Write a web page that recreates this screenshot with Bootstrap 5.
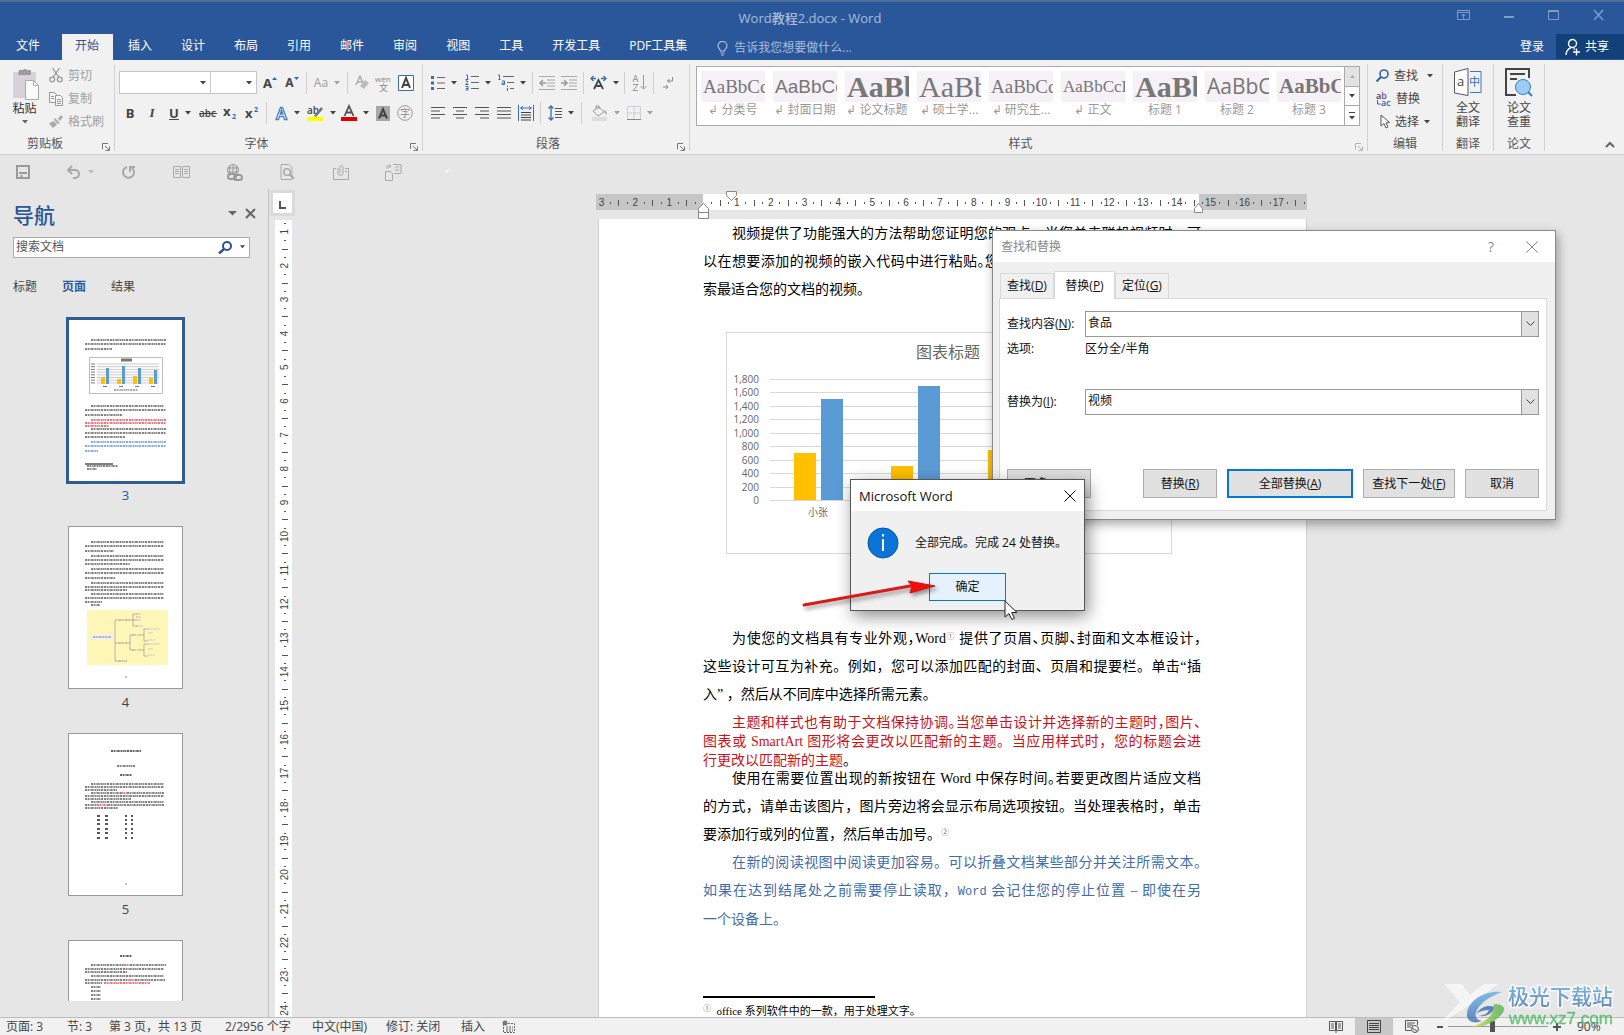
<!DOCTYPE html>
<html lang="zh-CN">
<head>
<meta charset="utf-8">
<meta name="viewport" content="width=device-width, initial-scale=1">
<title>Word教程2.docx - Word</title>
<link rel="stylesheet" href="https://cdn.jsdelivr.net/npm/bootstrap@5.3.0/dist/css/bootstrap.min.css">
<script src="https://cdn.jsdelivr.net/npm/bootstrap@5.3.0/dist/js/bootstrap.bundle.min.js"></script>
<style>
body{font-family:"Open Sans","Noto Sans CJK SC",sans-serif;font-size:12px;line-height:16px;color:#444;background:#e6e6e6;height:100vh;overflow:hidden}
button,input,select{font:inherit;color:inherit;border-radius:0}
svg{display:block;flex:none}
.plain{border:0;background:none;padding:0;display:inline-flex;align-items:center;justify-content:center;text-decoration:none;color:inherit;white-space:nowrap;flex:none}
/* title and tabs */
.titlebar{background:#2a579a;border-top:2px solid #4f6d99;height:34px;color:#a9bddb;padding-right:4px}
.titlebar h1{font-size:13px;line-height:16px;margin:0}
.titlebar .wins{right:20px;top:6px;gap:34px}
.tabrow{background:#2a579a;height:26px;color:#fff}
.tabrow a{height:26px;padding:0 14px 6px 15px;align-items:flex-end}
.tabrow a.filetab{padding:0 22px 6px 16px}
.tabrow a.is-on{background:#f1f1f1;color:#2a579a;padding:0 14px 6px 13px}
.tell{color:#a9bddb;gap:6px;margin-left:16px;padding-top:2px}
.sharebtn{background:#124078;height:25px;width:68px;gap:4px;color:#fff;padding-right:6px}
/* ribbon */
.ribbon{background:#f1f1f1;border-bottom:1px solid #cfcfcf;height:95px}
.grp{border-right:1px solid #d2d2d2;margin:4px 0;height:87px;position:relative;flex:none}
.grp .cap{position:absolute;left:0;right:0;bottom:-1px;text-align:center;color:#555}
.launch{position:absolute;right:4px;bottom:0}
.row-a{height:23px;margin-top:7px}
.row-b{height:22px;margin-top:8px}
.b22{width:22px;height:22px}
.b34{width:34px;height:22px;gap:6px}
.vsep{width:1px;height:22px;background:#d0d0d0;margin:0 3px;flex:none}
.fsel{height:23px;border:1px solid #c6c6c6;background:#fff;appearance:none;padding:0}
.combo{position:relative;flex:none}
.combo svg{position:absolute;right:5px;top:10px;pointer-events:none}
.glyph{font-family:"Noto Sans","Open Sans",sans-serif;font-size:13px;font-weight:700}
.gallery{border:1px solid #ababab;background:#fff;height:60px;margin:2px 7px 0 6px}
.sty{width:64px;color:#9a9a9a;justify-content:flex-start}
.sty .pv{width:64px;height:31px;background:#f5f1f6;color:#777;overflow:hidden;line-height:31px;text-align:left;padding-left:2px;white-space:nowrap}
.f-serif{font-family:"Liberation Serif",serif}
.f-mono{font-family:"Liberation Sans",sans-serif}
.s17{font-size:17px}.s19{font-size:19px}.s21{font-size:21px}.s30{font-size:30px}
.galscroll button{width:15px;border-left:1px solid #ababab;flex:1 1 0}
.galscroll button+button{border-top:1px solid #ababab}
.galscroll button:first-child{background:#e3e3e3}
.edit button{height:23px;gap:5px;color:#444}
.plain.off{color:#a0a0a0}
.big{flex-direction:column;line-height:14px}
/* quick access */
.qat{height:35px;padding-left:14px;gap:36px}
.qat button{width:17px;height:34px;overflow:visible}
/* navigation pane */
.nav-pane{width:269px;border-right:1px solid #c0c0c0;padding:0 18px 0 13px}
.nav-pane h2{font-size:21px;line-height:28px;color:#2a579a;margin:0}
.searchbox{border:1px solid #ababab;background:#fff;height:25px}
.searchbox input{border:0;outline:0;background:none;padding:0 0 0 2px}
.searchbox input::placeholder{color:#555;opacity:1}
.navtabs{gap:25px;margin-top:21px}
.thumbs{overflow:hidden;padding-right:12px;margin:20px 0 16px}
.thumb{height:207px}
.thumb .sheet{border:1px solid #999;background:#fff;width:115px;height:163px}
.thumb .num{font-size:13px;line-height:16px;margin-top:5px}
.thumb.is-on .sheet{outline:2px solid #2f5c93;border-color:#2f5c93}
.thumb.is-on .num{color:#2a579a}
/* document */
.vruler{width:25px;margin-left:1px;padding-top:1px}
.corner{width:25px;height:26px;border:3px solid #dadada;background:#fff}
.vstrip{background:#fff;width:17px;margin:4px 0 0 5px;overflow:hidden}
.docarea{padding-right:14px;overflow:hidden}
.pagewrap{width:709px;position:relative}
.hruler{height:25px}
.sheetpage{background:#fff;border:1px solid #d0d0d0;border-width:0 1px;margin-top:1px;padding:1px 105px 0 104px}
.para{font-family:"Liberation Serif","Noto Sans CJK SC",serif;font-size:14px;line-height:28px;color:#000;margin:0}
.para span.ln{display:block;white-space:nowrap;text-align:justify;text-align-last:justify}
.para span.end{text-align:left;text-align-last:left}
.para span.ind{padding-left:29px}
.para i{font-style:normal;font-feature-settings:"halt"}
.para sup{font-size:8px;line-height:8px;color:#777}
.para.tight{line-height:19px;margin:4px 0 -5px;color:#d01018}
.para.blue{color:#3f6cae}
.para.blue b{font-family:"Liberation Mono",monospace;font-weight:400;font-size:12px}
.chartbox{border:1px solid #d9d9d9;width:446px;height:222px;margin:28px 0 71px 23px}
.footrule{width:172px;height:2px;background:#000;margin-top:62px}
.foot{font-size:11px;line-height:20px;margin-top:3px}
/* dialogs */
.dlg{position:absolute;background:#f0f0f0;border:1px solid #8a8a8a;color:#111;z-index:5}
.dlg .bar{background:#fff;height:31px}
.dlg-find{left:394px;top:41px;width:564px;height:290px;box-shadow:2px 4px 10px rgba(0,0,0,.35)}
.dlg-msg{left:252px;top:290px;width:235px;height:132px;border-color:#555;box-shadow:3px 5px 16px rgba(0,0,0,.45);z-index:6}
.ftabs{padding:9px 7px 0;height:36px}
.ftabs button{height:25px;border:1px solid #d9d9d9;border-bottom:0;background:#f0f0f0;width:54px}
.ftabs button.is-on{background:#fff;height:28px;width:61px;margin-bottom:-1px;z-index:1}
.fpanel{background:#fff;border:1px solid #d9d9d9;margin:0 8px 0 6px;height:213px;padding:12px 7px 0 7px}
.fpanel label,.fpanel .lab{width:78px;flex:none}
.cbx{border:1px solid #999;height:26px;background:#fff}
.cbx input{border:0;outline:0;padding:0 0 2px 2px;background:none}
.cbx button{width:18px;border:1px solid #999;background:#e1e1e1;margin:-1px;height:26px}
.wbtn{border:1px solid #adadad;background:#e1e1e1;height:29px;padding:0;color:#111}
.wbtn.prime{border:2px solid #0078d7}
.w74{width:74px}.w84{width:84px}.w92{width:92px}.w126{width:126px}
.okbtn{border:1px solid #0078d7;background:#e5f1fb;width:77px;height:28px;color:#111}
.arrow{position:absolute;left:200px;top:382px;z-index:7;pointer-events:none}
.pointer{position:absolute;left:406px;top:411px;z-index:8;pointer-events:none}
/* status bar */
.status{height:18px;background:#f1f1f1;border-top:1px solid #bdbdbd;padding-left:6px;position:relative}
.status .views{margin-right:6px}
.status .views button{width:38px;height:17px}
.status .views button.is-on{background:#c8c8c8}
.zoombox{width:187px}
.zoomr{appearance:none;background:none;width:100px;height:16px;margin:0 5px}
.zoomr::-webkit-slider-runnable-track{height:1px;background:#999}
.zoomr::-webkit-slider-thumb{appearance:none;width:5px;height:11px;background:#555;margin-top:-5px}
.wm{position:absolute;right:8px;bottom:5px;z-index:9;pointer-events:none;opacity:.75}
</style>
</head>
<body class="d-flex flex-column m-0">

<svg width="0" height="0" class="position-absolute">
  <defs>
    <symbol id="car" viewBox="0 0 6 4"><path d="M0 0h6L3 3.5z" fill="currentColor"/></symbol>
    <symbol id="lau" viewBox="0 0 8 8"><path d="M.5 6V.5H6M3 3l4 4M7.500 3.500v4h-4" fill="none" stroke="#777"/></symbol>
  </defs>
</svg>

<header>
  <div class="titlebar position-relative d-flex justify-content-center align-items-center">
    <h1>Word教程2.docx - Word</h1>
    <div class="wins position-absolute d-flex">
      <button class="plain" aria-label="功能区显示选项"><svg width="13" height="14" fill="none" stroke="#7f9cc9"><path d="M.5 2.500h12v9H.5zM.5 4.500h12M6.500 10.500V6M4.500 8l2-2 2 2"/></svg></button>
      <button class="plain" aria-label="最小化"><svg width="10" height="14"><path d="M0 8h10v2H0z" fill="#7f9cc9"/></svg></button>
      <button class="plain" aria-label="最大化"><svg width="11" height="14" fill="none" stroke="#7f9cc9"><path d="M.5 2.500h10v9H.5zM0 3.500h11"/></svg></button>
      <button class="plain" aria-label="关闭"><svg width="11" height="14" stroke="#7f9cc9" stroke-width="1.500"><path d="M1 2l9 10M10 2L1 12"/></svg></button>
    </div>
  </div>
  <nav class="tabrow d-flex">
    <a class="plain filetab" href="#">文件</a><a class="plain is-on" href="#">开始</a><a class="plain" href="#">插入</a><a class="plain" href="#">设计</a><a class="plain" href="#">布局</a><a class="plain" href="#">引用</a><a class="plain" href="#">邮件</a><a class="plain" href="#">审阅</a><a class="plain" href="#">视图</a><a class="plain" href="#">工具</a><a class="plain" href="#">开发工具</a><a class="plain" href="#">PDF工具集</a>
    <button class="plain tell"><svg width="11" height="15" fill="none" stroke="#a9bddb" stroke-width="1.200"><path d="M3.500 10C3.500 8 1 7.500 1 4.800a4.400 4.400 0 0 1 9 0C10 7.500 7.500 8 7.500 10zM3.500 12h4M4 14h3"/></svg>告诉我您想要做什么...</button>
    <button class="plain ms-auto me-2 pe-1 text-white">登录</button>
    <button class="plain sharebtn"><svg width="16" height="18" fill="none" stroke="#fff" stroke-width="1.400"><circle cx="7.500" cy="5.500" r="4"/><path d="M1 17c0-4 2-6 5-7.500M8.500 10.500l1.500 1M8 14h7M11.500 10.500v7"/></svg>共享</button>
  </nav>
</header>

<section class="ribbon d-flex">
  <div class="grp d-flex" style="width:115px">
    <button class="plain big align-self-start ms-2 mt-1" style="width:33px;color:#333">
      <svg width="30" height="34"><path d="M3 4h23v26H3z" fill="#d8d2d8"/><path d="M9 2h4a2.500 2.500 0 0 1 4 0h4v5H8z" fill="#a09aa0"/><path d="M15.500 12.500h8l5 5v14h-13z" fill="#fafafa" stroke="#aaa"/><path d="M23.500 12.500v5h5" fill="none" stroke="#aaa"/></svg>
      <span>粘贴</span><svg class="mt-1" width="6" height="4" color="#666"><use href="#car"/></svg>
    </button>
    <div class="edit d-flex flex-column align-items-start ms-2">
      <button class="plain off"><svg width="14" height="15" fill="none" stroke="#999" stroke-width="1.300"><path d="M3.500 0L10 9.500M10.500 0L4 9.500"/><circle cx="3.200" cy="11.500" r="2.400"/><circle cx="10.800" cy="11.500" r="2.400"/></svg>剪切</button>
      <button class="plain off"><svg width="14" height="14" fill="#f5f5f5" stroke="#999"><path d="M.5.5h5l2 2v8h-7zM2 4.500h3M2 6.500h3"/><path d="M6.500 3.500h5l2 2v8h-7zM8 7.500h4M8 9.500h4M8 11.500h4"/></svg>复制</button>
      <button class="plain off"><svg width="14" height="14"><path d="M9 4l3-4 2 2-3 4zM6 3l5 5-2 1-4-4zM4.500 6L8 9.500 4 13 0 8.500z" fill="#aaa"/></svg>格式刷</button>
    </div>
    <span class="cap pe-4">剪贴板</span><button class="plain launch" aria-label="剪贴板选项"><svg width="8" height="8"><use href="#lau"/></svg></button>
  </div>

  <div class="grp ps-1" style="width:308px">
    <div class="row-a d-flex align-items-center">
      <div class="combo"><select class="fsel" style="width:92px" aria-label="字体"></select><svg width="6" height="4"><use href="#car"/></svg></div>
      <div class="combo"><select class="fsel border-start-0" style="width:46px" aria-label="字号"></select><svg width="6" height="4"><use href="#car"/></svg></div>
      <button class="plain b22 glyph" style="margin-left:2px" aria-label="增大字号">A<svg width="5" height="12"><path d="M0 3h5L2.500 0z" fill="#2a6ab5"/></svg></button>
      <button class="plain b22 glyph" aria-label="减小字号"><span style="font-size:12px">A</span><svg width="5" height="12"><path d="M0 0h5L2.500 3z" fill="#2a6ab5"/></svg></button>
      <span class="vsep"></span>
      <button class="plain b34 off">Aa<svg width="6" height="4"><use href="#car"/></svg></button>
      <span class="vsep"></span>
      <button class="plain b22" aria-label="清除格式"><svg width="15" height="15"><path d="M1 10L5 1l3 7M2.500 7h4" fill="none" stroke="#aaa" stroke-width="1.400"/><path d="M10 5l4 3-5 6-4-3z" fill="#bbb"/></svg></button>
      <button class="plain b22" aria-label="拼音指南"><svg width="18" height="20" fill="#888"><text x="0" y="9" font-size="8">wén</text><text x="4" y="18" font-size="9">文</text></svg></button>
      <button class="plain b22" aria-label="字符边框"><svg width="16" height="16"><path d="M.5.5h15v15H.5z" fill="#fff" stroke="#3b6cb0"/><path d="M4 13L8 3l4 10M5.500 10h5" fill="none" stroke="#444" stroke-width="2"/></svg></button>
    </div>
    <div class="row-b d-flex align-items-center">
      <button class="plain b22 glyph">B</button><button class="plain b22 glyph fst-italic f-serif">I</button>
      <button class="plain b34 glyph"><u>U</u><svg width="6" height="4"><use href="#car"/></svg></button>
      <button class="plain b22" aria-label="删除线"><svg width="19" height="16" fill="#444"><text x="0" y="12" font-size="10" font-weight="600">abc</text><path d="M0 8h18v1H0z"/></svg></button>
      <button class="plain b22" aria-label="下标"><svg width="14" height="18" fill="#444"><text x="0" y="12" font-size="13" font-weight="700">x</text><text x="9" y="15" font-size="7" font-weight="700" fill="#2a6ab5">2</text></svg></button>
      <button class="plain b22" aria-label="上标"><svg width="14" height="18" fill="#444"><text x="0" y="14" font-size="13" font-weight="700">x</text><text x="9" y="8" font-size="7" font-weight="700" fill="#2a6ab5">2</text></svg></button>
      <span class="vsep"></span>
      <button class="plain b34" aria-label="文本效果"><svg width="13" height="15"><path d="M1 13.500L5.500 1.500h2L12 13.500H9.500L8.500 10.500h-4L3.500 13.500zM5.200 8h2.600L6.500 4z" fill="#eef5fd" stroke="#4a80c0" stroke-width="1.300"/></svg><svg width="6" height="4"><use href="#car"/></svg></button>
      <button class="plain b34" aria-label="突出显示"><svg width="17" height="18"><text x="0" y="10" font-size="10" font-weight="600" fill="#444">ab</text><path d="M7 12l7-9 2 2-7 8z" fill="#777"/><path d="M0 13h16v4H0z" fill="#ff0"/></svg><svg width="6" height="4"><use href="#car"/></svg></button>
      <button class="plain b34" aria-label="字体颜色"><svg width="16" height="18"><path d="M3.500 12L8 2l4.500 10M5 8.500h6" fill="none" stroke="#555" stroke-width="1.800"/><path d="M0 13h16v4H0z" fill="#e00000"/></svg><svg width="6" height="4"><use href="#car"/></svg></button>
      <button class="plain b22" aria-label="字符底纹"><svg width="14" height="15"><path d="M0 0h14v15H0z" fill="#a8a8a8"/><path d="M3 12.500L7 3l4 9.500M4.500 9.500h5" fill="none" stroke="#444" stroke-width="2"/></svg></button>
      <button class="plain b22" aria-label="带圈字符"><svg width="16" height="16"><circle cx="8" cy="8" r="7.300" fill="none" stroke="#999"/><text x="3" y="12" font-size="10" fill="#888">字</text></svg></button>
    </div>
    <span class="cap pe-4">字体</span><button class="plain launch" aria-label="字体选项"><svg width="8" height="8"><use href="#lau"/></svg></button>
  </div>

  <div class="grp ps-1" style="width:267px">
    <div class="row-a d-flex align-items-center">
      <button class="plain b34" aria-label="项目符号"><svg width="14" height="16"><path d="M0 1h3v3H0zM0 6.500h3v3H0zM0 12h3v3H0z" fill="#3b6cb0"/><path d="M6 2.500h8M6 8h8M6 13.500h8" stroke="#666"/></svg><svg width="6" height="4"><use href="#car"/></svg></button>
      <button class="plain b34" aria-label="编号"><svg width="14" height="17" fill="none"><path d="M1 1h1.500v4M.5 5.500h3M.5 7h2v1.500l-2 2h3M.5 12.500h2.500v3.500H.5M1 14.500h2" stroke="#3b6cb0"/><path d="M6 2.500h8M6 8.500h8M6 14.500h8" stroke="#666"/></svg><svg width="6" height="4"><use href="#car"/></svg></button>
      <button class="plain b34" aria-label="多级列表"><svg width="16" height="17" fill="none"><path d="M0 1h1.500v4M.5 5.500h2M4 7h2.500v3.500H4V9h2M9.500 12v1M9.500 14v3" stroke="#3b6cb0"/><path d="M5 2.500h11M9 8.500h7M12 14.500h4" stroke="#666"/></svg><svg width="6" height="4"><use href="#car"/></svg></button>
      <span class="vsep"></span>
      <button class="plain b22" aria-label="减少缩进"><svg width="16" height="14" stroke="#aaa" fill="none"><path d="M0 .5h16M8 4h8M8 7h8M8 10h8M0 13.500h16"/><path d="M7 7H1M4 4L1 7l3 3" stroke="#999" stroke-width="1.500"/></svg></button>
      <button class="plain b22" aria-label="增加缩进"><svg width="16" height="14" stroke="#aaa" fill="none"><path d="M0 .5h16M8 4h8M8 7h8M8 10h8M0 13.500h16"/><path d="M0 7h6M3 4l3 3-3 3" stroke="#999" stroke-width="1.500"/></svg></button>
      <span class="vsep"></span>
      <button class="plain b34" aria-label="中文版式"><svg width="17" height="16" fill="none"><path d="M4 14L8.500 5 13 14M5.500 11h6" stroke="#444" stroke-width="1.800"/><path d="M6 3.500H1M3.500 1L1 3.500 3.500 6M11 3.500h5M13.500 1L16 3.500 13.500 6" stroke="#3b6cb0" stroke-width="1.300"/></svg><svg width="6" height="4"><use href="#car"/></svg></button>
      <span class="vsep"></span>
      <button class="plain b22" aria-label="排序"><svg width="15" height="17" fill="none" stroke="#999"><path d="M1 8L3.500 1 6 8M2 5.500h3M1 10.500h5l-5 6h5M11.500 1v14M8.500 12l3 3 3-3"/></svg></button>
      <span class="vsep"></span>
      <button class="plain b22" aria-label="显示编辑标记"><svg width="12" height="14" fill="none" stroke="#888"><path d="M10.500 1v4h-5M7.500 3l-2 2 2 2M1 11h5M4 9l2 2-2 2"/></svg></button>
    </div>
    <div class="row-b d-flex align-items-center">
      <button class="plain b22" aria-label="左对齐"><svg width="14" height="12" stroke="#555"><path d="M0 .5h14M0 4h9M0 7.500h14M0 11h9"/></svg></button>
      <button class="plain b22" aria-label="居中"><svg width="14" height="12" stroke="#555"><path d="M0 .5h14M3 4h8M0 7.500h14M3 11h8"/></svg></button>
      <button class="plain b22" aria-label="右对齐"><svg width="14" height="12" stroke="#555"><path d="M0 .5h14M5 4h9M0 7.500h14M5 11h9"/></svg></button>
      <button class="plain b22" aria-label="两端对齐"><svg width="14" height="12" stroke="#555"><path d="M0 .5h14M0 4h14M0 7.500h14M0 11h14"/></svg></button>
      <button class="plain b22" aria-label="分散对齐"><svg width="16" height="16" fill="none"><path d="M.5 0v16M15.500 0v16M2 3h12M5 1L3 3l2 2M11 1l2 2-2 2" stroke="#3b6cb0"/><path d="M3 7.500h10M3 10h10M3 12.500h10M3 15h10" stroke="#444"/></svg></button>
      <span class="vsep"></span>
      <button class="plain b34" aria-label="行距"><svg width="14" height="16" fill="none"><path d="M3 1v14M.5 3.500L3 1l2.500 2.500M.5 12.500L3 15l2.500-2.500" stroke="#3b6cb0" stroke-width="1.300"/><path d="M7 3.500h7M7 6.500h7M7 9.500h7M7 12.500h7" stroke="#555"/></svg><svg width="6" height="4"><use href="#car"/></svg></button>
      <span class="vsep"></span>
      <button class="plain b34 off ms-1" aria-label="底纹"><svg width="16" height="16"><path d="M1 6l6-4 5 5-6 4zM4 4V1h3v3" fill="none" stroke="#999"/><path d="M12 5c3 1 3 3 2 5z" fill="#999"/><path d="M0 12h15v4H0z" fill="#ddd"/></svg><svg width="6" height="4"><use href="#car"/></svg></button>
      <button class="plain b34 off" aria-label="边框"><svg width="14" height="14" fill="none"><path d="M.5.5h13v13H.5zM7 0v14M0 7h14" stroke="#c0a0c0" stroke-dasharray="1 1"/><path d="M0 13.500h14" stroke="#888"/></svg><svg width="6" height="4"><use href="#car"/></svg></button>
    </div>
    <span class="cap pe-3">段落</span><button class="plain launch" aria-label="段落选项"><svg width="8" height="8"><use href="#lau"/></svg></button>
  </div>

  <div class="grp flex-fill">
    <div class="gallery d-flex">
      <div class="d-flex flex-fill overflow-hidden ps-1 pt-1 gap-2">
        <button class="plain sty flex-column"><span class="pv f-serif s19">AaBbCc</span><span>↲ 分类号</span></button>
        <button class="plain sty flex-column"><span class="pv f-mono s19">AaBbCc</span><span>↲ 封面日期</span></button>
        <button class="plain sty flex-column"><span class="pv f-serif s30 fw-bold">AaBb</span><span>↲ 论文标题</span></button>
        <button class="plain sty flex-column"><span class="pv f-serif s30">AaBb</span><span>↲ 硕士学...</span></button>
        <button class="plain sty flex-column"><span class="pv f-serif s19">AaBbCc</span><span>↲ 研究生...</span></button>
        <button class="plain sty flex-column"><span class="pv f-serif s17">AaBbCcDd</span><span>↲ 正文</span></button>
        <button class="plain sty flex-column"><span class="pv f-serif s30 fw-bold">AaBb</span><span>标题 1</span></button>
        <button class="plain sty flex-column"><span class="pv s21">AaBbC</span><span>标题 2</span></button>
        <button class="plain sty flex-column"><span class="pv f-serif s21 fw-bold">AaBbC</span><span>标题 3</span></button>
      </div>
      <div class="galscroll d-flex flex-column">
        <button class="plain off" aria-label="向上"><svg width="5" height="3"><path d="M0 3h5L2.500 0z" fill="#aaa"/></svg></button>
        <button class="plain" aria-label="向下"><svg width="6" height="4"><use href="#car"/></svg></button>
        <button class="plain" aria-label="更多样式"><svg width="6" height="8"><path d="M0 .5h6" stroke="#444"/><path d="M0 4h6L3 7.500z" fill="#444"/></svg></button>
      </div>
    </div>
    <span class="cap pe-3">样式</span><button class="plain launch" aria-label="样式选项"><svg width="8" height="8" opacity=".5"><use href="#lau"/></svg></button>
  </div>

  <div class="grp ps-2" style="width:75px">
    <div class="edit d-flex flex-column align-items-start">
      <button class="plain"><svg width="13" height="13" fill="none"><circle cx="8" cy="5" r="4" stroke="#2f62ad" stroke-width="1.600"/><path d="M5 8l-4.500 4.500" stroke="#2f62ad" stroke-width="2"/></svg>查找<svg class="ms-1" width="6" height="4"><use href="#car"/></svg></button>
      <button class="plain"><svg width="15" height="18"><text x="0" y="9" font-size="9" font-weight="600" fill="#444">a<tspan fill="#8a3fa8">b</tspan></text><text x="5" y="16" font-size="9" font-weight="600" fill="#2f62ad">ac</text><path d="M1.500 10v4h3" fill="none" stroke="#2f62ad"/></svg>替换</button>
      <button class="plain"><svg class="ms-1" width="10" height="15"><path d="M1 1v11l3-2.500 2 4.500 2-1-2-4 3.500-.5z" fill="#fff" stroke="#555"/></svg>选择<svg width="6" height="4"><use href="#car"/></svg></button>
    </div>
    <span class="cap">编辑</span>
  </div>
  <div class="grp" style="width:51px">
    <button class="plain big w-100 mt-1"><svg class="mb-1" width="28" height="29" fill="none"><path d="M.5 4L14 .5v27L.5 25z" fill="#fff" stroke="#555"/><path d="M16 3.500h11v21H16" stroke="#3b78c8"/><text x="3" y="18" font-size="13" fill="#444">a</text><text x="15" y="18" font-size="11" fill="#2f6fc4">中</text></svg><span>全文<br>翻译</span></button>
    <span class="cap">翻译</span>
  </div>
  <div class="grp" style="width:51px">
    <button class="plain big w-100 mt-1"><svg class="mb-1" width="30" height="29" fill="none"><path d="M25 10V1H2v26h10" stroke="#444" stroke-width="2"/><path d="M6 6h15M6 11h7" stroke="#444" stroke-width="2"/><circle cx="19" cy="19" r="7.500" fill="#9ccbf5" stroke="#2f7fd0"/><path d="M24 24l4 4" stroke="#2f7fd0" stroke-width="2"/></svg><span>论文<br>查重</span></button>
    <span class="cap">论文</span>
  </div>
  <div class="d-flex align-items-end justify-content-end pb-1 pe-2" style="width:79px"><button class="plain" aria-label="折叠功能区"><svg width="12" height="10" fill="none"><path d="M2 7l4-4 4 4" stroke="#666" stroke-width="2"/></svg></button></div>
</section>

<div class="qat d-flex">
  <button class="plain" aria-label="保存"><svg width="14" height="14" fill="none" stroke="#999" stroke-width="2"><path d="M1 1h12v12H1z"/><path d="M3 8h8M5.500 13v-3" /></svg></button>
  <button class="plain ps-2" aria-label="撤消"><svg width="14" height="14" fill="none" stroke="#a8a8a8" stroke-width="2"><path d="M2 5h7a4 4 0 0 1 0 8H7M6 1L2 5l4 4"/></svg><svg class="ms-2" width="6" height="4" color="#bbb"><use href="#car"/></svg></button>
  <button class="plain" aria-label="重复"><svg width="14" height="14" fill="none" stroke="#a8a8a8" stroke-width="2"><path d="M5 2a5.500 5.500 0 1 0 5 1M8 7V2h5"/></svg></button>
  <button class="plain" aria-label="双页"><svg width="17" height="12" fill="none" stroke="#aaa"><path d="M.5.5h7v11h-7zM9.500.5h7v11h-7zM2 3.500h4M2 5.500h4M2 7.500h4M11 3.500h4M11 5.500h4M11 7.500h4"/></svg></button>
  <button class="plain" aria-label="超链接"><svg width="17" height="17" fill="none" stroke="#999"><circle cx="7" cy="6" r="5.500"/><path d="M2 4h10M2 8h10M7 .5v11M4 2q-1 4 0 8M10 2q1 4 0 8"/><rect x="2" y="10" width="8" height="5" rx="2.500" stroke-width="2" fill="#e6e6e6"/><rect x="8" y="11" width="8" height="5" rx="2.500" stroke-width="2"/></svg></button>
  <button class="plain" aria-label="打印预览"><svg width="15" height="16" fill="none" stroke="#aaa"><path d="M1 .5h8l3 3v12H1z"/><circle cx="7" cy="8" r="3.300" stroke-width="1.500"/><path d="M9.500 10.500l4.500 4" stroke-width="2"/></svg></button>
  <button class="plain" aria-label="附件"><svg width="16" height="15" fill="none" stroke="#aaa"><path d="M3 3.500H.5v11h15v-11H12"/><path d="M5 3v5a2 2 0 0 0 5 0V2a1.500 1.500 0 0 0-3 0v6M12 6.500h2"/></svg></button>
  <button class="plain" aria-label="切换窗口"><svg width="17" height="17" fill="none" stroke="#aaa"><path d="M.5 7.500h5l2 2v7h-7zM8 .5h8v9H9M10 3h4M10 6h4M2 5V2h4M4 .5L6 2 4 4"/></svg></button>
  <button class="plain" aria-label="自定义"><svg width="6" height="4" color="#f5f5f5"><use href="#car"/></svg></button>
</div>

<main class="d-flex flex-fill overflow-hidden" style="min-height:0">
  <aside class="nav-pane d-flex flex-column flex-shrink-0">
    <div class="d-flex align-items-center mt-2 pt-1 mb-2">
      <h2 class="me-auto">导航</h2>
      <button class="plain me-2 mb-1" aria-label="任务窗格选项"><svg width="9" height="5"><path d="M0 0h9L4.500 4.500z" fill="#666"/></svg></button>
      <button class="plain mb-1" style="margin-right:-6px" aria-label="关闭窗格"><svg width="11" height="11" stroke="#666" stroke-width="2"><path d="M1 1l9 9M10 1l-9 9"/></svg></button>
    </div>
    <div class="searchbox d-flex align-items-center">
      <input class="flex-fill" type="text" placeholder="搜索文档" aria-label="搜索文档">
      <svg width="14" height="13" fill="none" stroke="#2f4f96"><circle cx="9" cy="5" r="4" stroke-width="2"/><path d="M6 8l-5 4.500" stroke-width="2.500"/></svg>
      <svg class="ms-2 me-1" width="5" height="4"><use href="#car"/></svg>
    </div>
    <div class="navtabs d-flex">
      <button class="plain">标题</button><button class="plain fw-bold" style="color:#2a579a">页面</button><button class="plain">结果</button>
    </div>
    <div class="thumbs flex-fill d-flex flex-column align-items-center" id="thumbs"></div>
  </aside>

  <div class="vruler d-flex flex-column flex-shrink-0">
    <div class="corner"><svg width="19" height="20"><path d="M7 8v7h6" fill="none" stroke="#555" stroke-width="2"/></svg></div>
    <div class="vstrip flex-fill"><svg id="vr" width="17" height="820"></svg></div>
  </div>

  <div class="docarea flex-fill d-flex justify-content-center">
    <div class="pagewrap d-flex flex-column flex-shrink-0">
      <div class="mt-1"><svg id="hr" class="hruler" width="709" height="25" overflow="visible"></svg></div>
      <article class="sheetpage flex-fill">
        <p class="para"><span class="ln ind">视频提供了功能强大的方法帮助您证明您的观点。当您单击联机视频时，可</span><span class="ln">以在想要添加的视频的嵌入代码中进行粘贴<i>。</i>您也可以键入一个关键字以联机搜</span><span class="ln end">索最适合您的文档的视频。</span></p>
        <div class="chartbox"><svg id="chart" width="444" height="220"></svg></div>
        <p class="para"><span class="ln ind">为使您的文档具有专业外观<i>，</i>Word<sup>①</sup> 提供了页眉<i>、</i>页脚<i>、</i>封面和文本框设计<i>，</i></span><span class="ln">这些设计可互为补充。例如，您可以添加匹配的封面、页眉和提要栏。单击<i>“</i>插</span><span class="ln end">入<i>”</i> ，然后从不同库中选择所需元素。</span></p>
        <p class="para tight"><span class="ln ind">主题和样式也有助于文档保持协调<i>。</i>当您单击设计并选择新的主题时<i>，</i>图片<i>、</i></span><span class="ln">图表或 SmartArt 图形将会更改以匹配新的主题。当应用样式时，您的标题会进</span><span class="ln end">行更改以匹配新的主题<span class="text-black">。</span></span></p>
        <p class="para"><span class="ln ind">使用在需要位置出现的新按钮在 Word 中保存时间<i>。</i>若要更改图片适应文档</span><span class="ln">的方式，请单击该图片，图片旁边将会显示布局选项按钮。当处理表格时，单击</span><span class="ln end">要添加行或列的位置，然后单击加号。<sup>②</sup></span></p>
        <p class="para blue"><span class="ln ind">在新的阅读视图中阅读更加容易。可以折叠文档某些部分并关注所需文本<i>。</i></span><span class="ln">如果在达到结尾处之前需要停止读取，<b>Word</b> 会记住您的停止位置 – 即使在另</span><span class="ln end">一个设备上。</span></p>
        <div class="footrule"></div>
        <p class="para foot"><sup>①</sup>&nbsp; office 系列软件中的一款，用于处理文字。</p>
      </article>

      <div class="dlg dlg-find" role="dialog" aria-label="查找和替换">
        <div class="bar d-flex align-items-center ps-2" style="color:#888">
          <span class="me-auto">查找和替换</span>
          <button class="plain me-4" aria-label="帮助" style="font-size:14px">?</button>
          <button class="plain ms-2" style="margin-right:17px" aria-label="关闭"><svg width="12" height="12" stroke="#888"><path d="M.5.5l11 11M11.500.5l-11 11"/></svg></button>
        </div>
        <div class="ftabs d-flex align-items-end">
          <button class="plain">查找(<u>D</u>)</button><button class="plain is-on">替换(<u>P</u>)</button><button class="plain">定位(<u>G</u>)</button>
        </div>
        <div class="fpanel d-flex flex-column">
          <div class="d-flex align-items-center"><label for="q">查找内容(<u>N</u>):</label><div class="cbx d-flex flex-fill"><input id="q" class="flex-fill" value="食品"><button class="plain" aria-label="展开"><svg width="9" height="6" fill="none" stroke="#444"><path d="M.5.5l4 4 4-4"/></svg></button></div></div>
          <div class="d-flex mt-1"><span class="lab">选项:</span><span>区分全/半角</span></div>
          <div class="d-flex align-items-center mt-4 pt-2"><label for="r">替换为(<u>I</u>):</label><div class="cbx d-flex flex-fill"><input id="r" class="flex-fill" value="视频"><button class="plain" aria-label="展开"><svg width="9" height="6" fill="none" stroke="#444"><path d="M.5.5l4 4 4-4"/></svg></button></div></div>
          <div class="d-flex mt-auto pb-2 mb-1" style="gap:10px"><button class="wbtn w84 me-auto pe-2">更多(<u>M</u>)</button><button class="wbtn w74">替换(<u>R</u>)</button><button class="wbtn prime w126">全部替换(<u>A</u>)</button><button class="wbtn w92">查找下一处(<u>F</u>)</button><button class="wbtn w74">取消</button></div>
        </div>
      </div>

      <div class="dlg dlg-msg" role="alertdialog" aria-label="Microsoft Word">
        <div class="bar d-flex align-items-center ps-2 pe-2"><span class="me-auto" style="font-size:13px">Microsoft Word</span><button class="plain" aria-label="关闭"><svg width="12" height="12" stroke="#111"><path d="M.5.5l11 11M11.500.5l-11 11"/></svg></button></div>
        <div class="d-flex align-items-center ms-3 mt-3"><svg width="32" height="32"><circle cx="16" cy="16" r="15" fill="#0a74d8" stroke="#0a55a0"/><path d="M15 12h2v12h-2zM15 7h2v2.500h-2z" fill="#fff"/></svg><span class="ms-3">全部完成。完成 24 处替换。</span></div>
        <div class="text-center" style="margin-top:14px"><button class="okbtn p-0">确定</button></div>
      </div>

      <svg class="arrow" width="145" height="50" style="filter:drop-shadow(2px 3px 2px rgba(0,0,0,.4))"><path d="M6 34L112 15" stroke="#d91a1a" stroke-width="3" stroke-linecap="round"/><path d="M137 15L110 10l4 5-2 7z" fill="#f20d0d" stroke="#d01010"/></svg>
      <svg class="pointer" width="14" height="21"><path d="M1 1v16l4-3.500 3 6 2.500-1.200-2.800-5.800H13z" fill="#fff" stroke="#222"/></svg>
    </div>
  </div>
</main>

<footer class="status d-flex align-items-center">
  <span style="width:61px">页面: 3</span><span style="width:42px">节: 3</span><span style="width:116px">第 3 页，共 13 页</span><span style="width:87px">2/2956 个字</span><span style="width:74px">中文(中国)</span><span style="width:75px">修订: 关闭</span><span style="width:41px">插入</span>
  <svg width="13" height="13" fill="none" stroke="#666"><path d="M1.500 4v8.500h11v-9H6M4 7h7M4 9h7M4 11h7" stroke-dasharray="2 1"/><circle cx="3" cy="3" r="2.500" fill="#777" stroke="none"/></svg>
  <div class="views d-flex ms-auto">
    <button class="plain" aria-label="阅读视图"><svg width="14" height="13" fill="none" stroke="#555"><path d="M.5 1.500h6v9h-6zM7.500 1.500h6v9h-6zM7 1v12M2 4h3M2 6h3M2 8h3M9 4h3M9 6h3M9 8h3"/></svg></button><button class="plain is-on" aria-label="页面视图"><svg width="14" height="13" fill="none" stroke="#444"><path d="M.5.5h13v12H.5zM2 3.500h10M2 5.500h10M2 7.500h10M2 9.500h10"/></svg></button><button class="plain" aria-label="Web 版式"><svg width="14" height="13" fill="none" stroke="#555"><path d="M12.500 5V.5H.5v10H6M2 3h8M2 5h6M2 7h4"/><circle cx="10" cy="9" r="3.500"/><path d="M7 8l5 3"/></svg></button>
  </div>
  <div class="zoombox d-flex align-items-center"><svg width="6" height="2"><path d="M0 0h6v2H0z" fill="#555"/></svg><input class="zoomr" type="range" min="10" max="200" value="94" aria-label="缩放"><svg width="8" height="8"><path d="M3 0h2v3h3v2H5v3H3V5H0V3h3z" fill="#555"/></svg><span class="ms-3">90%</span></div>

  <svg class="wm" width="184" height="62">
    <defs><linearGradient id="g1" x2="0" y2="1"><stop stop-color="#5aaee6"/><stop offset="1" stop-color="#3568b0"/></linearGradient><linearGradient id="g2"><stop stop-color="#d8d23a"/><stop offset="1" stop-color="#3fae4a"/></linearGradient></defs>
    <path d="M12 16h18l8 11 14-11h14L42 34 8 56l20-22z" fill="#fafafa"/>
    <path d="M70 24C52 22 34 34 35 48c1 6 8 8 15 5-6-1-8-5-5-11 4-8 14-14 25-18z" fill="url(#g1)"/>
    <path d="M44 46c6-8 12-9 19-7-2 6-8 10-16 9 6-1 9-3 10-6-5 0-9 1-13 4z" fill="#2f62ad"/>
    <path d="M62 36c12 0 13 7 4 14-7 6-17 10-27 9 14-4 24-12 23-23z" fill="url(#g2)"/>
    <text x="76" y="36" font-size="21" font-weight="500" fill="url(#g1)" stroke="#fff" stroke-width="3" paint-order="stroke">极光下载站</text>
    <text x="77" y="56" font-size="17" fill="#3fb558" stroke="#3fb558" stroke-width=".4" font-family="Liberation Sans,sans-serif">www.xz7.com</text>
  </svg>
</footer>

<script>
// rulers: one centimetre at 90 % zoom
const CM = 33.84;
const num = (x, y, n, rot) => `<text x="${x}" y="${y}" text-anchor="middle" font-size="10" fill="#444" font-family="Liberation Sans,sans-serif"${rot || ''}>${n}</text>`;
let h = '<path d="M-2 1h711v16H-2z" fill="#c6c6c6"/><path d="M105 1h496v16H105z" fill="#fff"/>';
for (let i = -3; i <= 17; i++) {
  const x = 105 + i * CM;
  if (i) h += num(x, 13, Math.abs(i));
  for (const [f, bar] of [[.25, 0], [.5, 1], [.75, 0]]) { const p = Math.round(x + f * CM); if (p < 708) h += bar ? `<path d="M${p} 7h1v6h-1z" fill="#555"/>` : `<path d="M${p} 9h1v2h-1z" fill="#555"/>`; }
}
h += '<g fill="#fff" stroke="#888"><path d="M128.500-1.500h10v4l-5 5-5-5z"/><path d="M110.500 25.500h-10v-10l5-5 5 5zM100.500 19.500h10"/><path d="M596.500 19.500v-4l4-5 4 5v4z"/></g>';
document.getElementById('hr').innerHTML = h;
let v = '';
for (let i = 1; i <= 24; i++) {
  const y = i * CM - 22;
  v += num(13, y, i, ` transform="rotate(-90 13 ${y})"`);
  [-.25, .25, .5].forEach(f => { const p = Math.round(y + f * CM); v += f === .5 ? `<path d="M7 ${p}h6v1H7z" fill="#555"/>` : `<path d="M9 ${p}h2v1H9z" fill="#555"/>`; });
}
document.getElementById('vr').innerHTML = v;

// sales chart
const vals = [[700, 1500], [500, 1700], [750, 1500], [600, 1300]];
let c = '<text x="221" y="25" text-anchor="middle" font-size="16" fill="#666">图表标题</text>';
for (let i = 0; i <= 9; i++) {
  const y = Math.round(167 - i * 13.5);
  c += `<path d="M43 ${y}h387v1H43z" fill="#d9d9d9"/><text x="32" y="${y + 4}" text-anchor="end" font-size="10" fill="#666">${(i * 200).toLocaleString('en-US')}</text>`;
}
vals.forEach(([a, b], i) => {
  const x = 67 + i * 97, s = .0673;
  c += `<rect x="${x}" y="${Math.round(167 - a * s)}" width="22" height="${Math.round(a * s)}" fill="#ffc000"/><rect x="${x + 27}" y="${Math.round(167 - b * s)}" width="22" height="${Math.round(b * s)}" fill="#5b9bd5"/>`;
});
c += '<text x="91" y="183" text-anchor="middle" font-size="10" fill="#666">小张</text>';
document.getElementById('chart').innerHTML = c;

// page thumbnails: rows of [x, y, width, colour]
const K = '#333', R = '#e02030', B = '#3a78c8';
const ln = rows => rows.map(([x, y, w, col = K]) => `<path d="M${x} ${y}h${w}" stroke="${col}" stroke-width="1.700" stroke-dasharray="2 .6 1.500 .5 1 .6 2.500 .8" opacity=".8"/>`).join('');
const mini = () => { let s = '<path d="M20.500 37.500h73v36h-73z" fill="#fff" stroke="#bbb"/><path d="M52 40h11" stroke="#777" stroke-width="3"/>'; for (let i = 0; i < 8; i++) s += `<path d="M28 ${44 + i * 2.7}h62" stroke="#bbb" stroke-width=".8"/><path d="M22 ${44 + i * 2.7}h4" stroke="#777"/>`; [[57, 48], [59, 46], [56, 48], [58, 50]].forEach(([a, b], i) => s += `<path d="M${32 + i * 16} ${a}h4v${64 - a}h-4z" fill="#ffc000"/><path d="M${37 + i * 16} ${b}h3v${64 - b}h-3z" fill="#5b9bd5"/>`); return s + '<path d="M34 66.500h56" stroke="#777" stroke-dasharray="4 12"/>' + ln([[45, 70, 24, '#777']]); };
const pages = [
  [3, ln([[22, 20, 75], [16, 24, 81], [16, 29, 27], [22, 86, 73], [16, 90, 81], [16, 95, 37], [22, 100, 75, R], [16, 103, 81, R], [16, 106, 24, R], [22, 109, 75], [16, 113, 81], [16, 117, 40], [22, 122, 75, B], [16, 126, 81, B], [16, 131, 13, B], [18, 146, 31], [18, 149, 10]]) + mini() + '<path d="M16 144h28" stroke="#000"/>'],
  [4, ln([[22, 15, 73], [16, 19, 79], [16, 24, 29], [22, 29, 73], [16, 33, 79], [16, 37, 45], [22, 42, 73], [16, 46, 79], [16, 51, 30], [22, 56, 73], [16, 60, 79], [16, 63, 42], [22, 67, 73], [16, 71, 79], [16, 75, 17], [22, 78, 9]]) + '<path d="M18 83h81v55H18z" fill="#fff6b8"/><path d="M22 107h22v6H22z" fill="#f1f1f1"/><g fill="none" stroke="#999" stroke-width=".7"><path d="M50 93h-4v41h4M46 116h4M60 93h5M68 87h-4v12h4M64 93h3M58 116h3M66 108h-5v15h5M79 102h-4v12h4M75 108h-5M79 117h-4v12h4M75 123h-5"/></g>' + ln([[24, 110, 18, '#888'], [50, 93, 11, '#999'], [50, 116, 8, '#999'], [50, 134, 8, '#999'], [67, 87, 5, '#bbb'], [67, 90, 5, '#bbb'], [67, 93, 5, '#bbb'], [67, 99, 7, '#bbb'], [63, 108, 8, '#bbb'], [63, 123, 8, '#bbb'], [79, 102, 12, '#ccc'], [79, 106, 5, '#ccc'], [79, 113, 7, '#ccc'], [79, 117, 12, '#ccc'], [79, 122, 5, '#ccc'], [79, 128, 7, '#ccc']]) + '<path d="M56 150h2" stroke="#888"/>'],
  [5, ln([[42, 17, 30, '#000'], [48, 32, 18], [51, 41, 12, '#000'], [22, 50, 73], [16, 53, 79], [16, 56, 32], [22, 59, 30], [58, 59, 37], [16, 62, 79], [16, 65, 46], [22, 68, 73], [16, 71, 12], [39, 71, 56], [16, 74, 33], [52, 59, 6, R], [28, 71, 11, R]]) + [82, 86, 90, 95, 99, 104].map(y => `<path d="M28 ${y}h3M36 ${y}h3M56 ${y}h2M62 ${y}h2" stroke="#555" stroke-width="2"/>`).join('') + '<path d="M56 150h2" stroke="#888"/>'],
  [6, ln([[51, 15, 12, '#000'], [22, 24, 33], [61, 24, 36], [16, 28, 79], [16, 31, 42], [22, 35, 73], [16, 39, 44], [66, 39, 30], [16, 42, 17], [55, 24, 6, R], [60, 39, 6, R], [35, 42, 46, R], [22, 46, 10], [22, 50, 10], [22, 54, 10], [22, 58, 10], [22, 61, 10]])]
];
document.getElementById('thumbs').innerHTML = pages.map(([n, s], i) => `<div class="thumb flex-shrink-0 text-center${i ? '' : ' is-on mt-1'}"><div class="sheet"><svg width="113" height="161">${s}</svg></div><div class="num">${n}</div></div>`).join('');
</script>
</body>
</html>
